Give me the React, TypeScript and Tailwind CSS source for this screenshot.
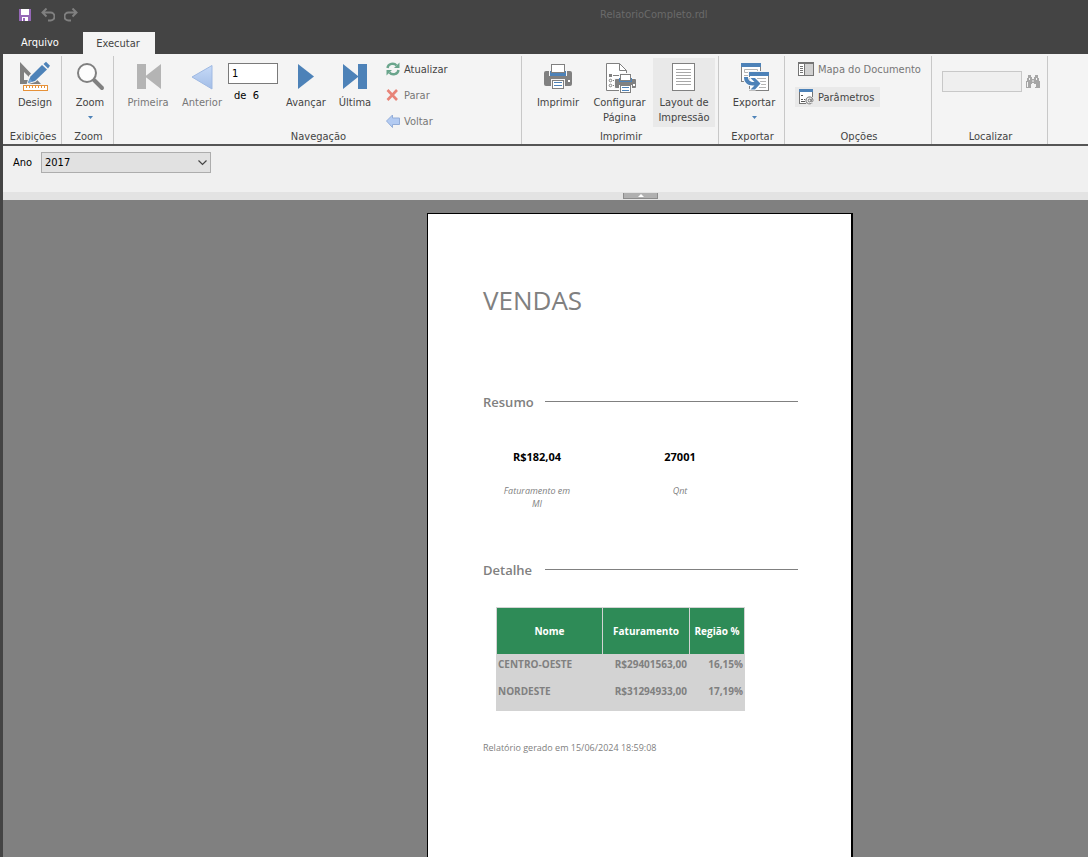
import type { ReactNode } from "react";

const uiFont = "font-['DejaVu_Sans_Condensed','DejaVu_Sans',sans-serif]";
const reportFont = "font-['Open_Sans','Noto_Sans',sans-serif]";

function Svg({ children, w = 32, h = 32 }: { children: ReactNode; w?: number; h?: number }) {
  return (
    <svg aria-hidden="true" width={w} height={h} viewBox={`0 0 ${w} ${h}`} className="shrink-0">
      {children}
    </svg>
  );
}

const DesignIcon = () => (
  <Svg>
    <path fillRule="evenodd" fill="#808080" d="M1 1 L22 23 H1 Z M5 11 V19 H13 Z" />
    <path d="M9 22 L11 15 L26 0 L31 5 L16 20 Z" fill="#f4f4f4" stroke="#f4f4f4" strokeWidth="2" />
    <path d="M9 22 L11.500 15.500 L23 4 L28 8.500 L16 20 Z" fill="#4d82b8" />
    <path d="M24.500 3 L27 0.800 L31 4.800 L29 7.500 Z" fill="#4d82b8" />
    <path d="M9 22 L10.500 17.500 L13.500 20.500 Z" fill="#6fa0d0" />
    <rect x="4.500" y="24.500" width="24" height="5" fill="#fff" stroke="#e69138" />
    <path d="M7.500 25v2M10.500 25v2M13.500 25v2M16.500 25v2M19.500 25v2M22.500 25v2M25.500 25v2" stroke="#e69138" />
  </Svg>
);
const ZoomIcon = () => (
  <Svg>
    <path d="M19 18 L28 27" stroke="#808080" strokeWidth="4" strokeLinecap="round" />
    <circle cx="13" cy="12" r="9" fill="#fdfdfd" stroke="#808080" strokeWidth="2" />
  </Svg>
);
const FirstIcon = () => (
  <Svg><path fill="#b4b4b4" d="M5 3h9v25H5z M13 15.500 L29 3 V28Z" /></Svg>
);
const PrevIcon = () => (
  <Svg>
    <defs>
      <linearGradient id="prev" x1="0" y1="0" x2="0" y2="1">
        <stop offset="0" stopColor="#c6daf8" /><stop offset="1" stopColor="#a3bde6" />
      </linearGradient>
    </defs>
    <path d="M6 16 L26 4.500 V28Z" fill="url(#prev)" stroke="#9fb9e2" strokeLinejoin="round" />
  </Svg>
);
const NextIcon = () => (
  <Svg><path fill="#4d82b8" d="M8 3 L24 15.500 L8 28Z" /></Svg>
);
const LastIcon = () => (
  <Svg><path fill="#4d82b8" d="M4 3 L19 15 V3h9v25h-9V16 L4 28Z" /></Svg>
);
const PrintIcon = () => (
  <Svg>
    <rect x="2" y="10" width="28" height="15" rx="2" fill="#808080" />
    <path d="M7 9h18v6H7z" fill="#f4f4f4" />
    <path d="M8 10h16v5H8z" fill="#4d82b8" />
    <rect x="9.500" y="3.500" width="13" height="8" fill="#fff" stroke="#808080" />
    <path d="M9 18h14v11H9z" fill="#f4f4f4" />
    <rect x="10.500" y="19.500" width="11" height="8" fill="#fff" stroke="#808080" />
    <path d="M12 21.500h8M12 24.500h8" stroke="#4d82b8" />
    <rect x="26" y="19" width="2" height="2" fill="#fff" />
  </Svg>
);
const PageSetupIcon = () => (
  <Svg>
    <path d="M2.500 2.500h13l7 7v20h-20z" fill="#fff" stroke="#808080" />
    <path d="M15.500 2.500v7h7" fill="none" stroke="#808080" />
    <rect x="5" y="13" width="3" height="3" fill="#808080" />
    <path d="M9 14.500h6M9 19.500h2M9 24.500h2" stroke="#808080" />
    <circle cx="6.500" cy="19.500" r="1.300" fill="#fff" stroke="#808080" />
    <circle cx="6.500" cy="24.500" r="1.300" fill="#fff" stroke="#808080" />
    <path d="M15 12h13v5h4v11h-4v4H15v-4h-5V17h5z" fill="#f8f8f8" />
    <rect x="11" y="18" width="21" height="9" rx="1" fill="#808080" />
    <path d="M15 17h13v4H15z" fill="#4d82b8" />
    <rect x="16.500" y="13.500" width="10" height="6" fill="#fff" stroke="#808080" />
    <path d="M15 24h13v8H15z" fill="#f8f8f8" />
    <rect x="16.500" y="24.500" width="10" height="7" fill="#fff" stroke="#808080" />
    <path d="M18 26.500h7M18 29.500h7" stroke="#4d82b8" />
    <rect x="29" y="23" width="2" height="2" fill="#fff" />
  </Svg>
);
const PageIcon = () => (
  <Svg>
    <rect x="4.500" y="2.500" width="22" height="27" fill="#fff" stroke="#808080" />
    <path d="M8 8.500h15M8 11.500h15M8 14.500h15M8 17.500h15M8 20.500h15M8 23.500h15" stroke="#a8a8a8" />
  </Svg>
);
const ExportIcon = () => (
  <Svg>
    <rect x="3.500" y="2.500" width="19" height="18" fill="#fff" stroke="#808080" />
    <path d="M3 2h20v4H3z" fill="#4d82b8" />
    <path d="M6.500 8.500h13v3h-13zM6 14.500h4" fill="none" stroke="#b4b4b4" />
    <path d="M10 10h22v21H10z" fill="#f4f4f4" />
    <rect x="11.500" y="11.500" width="19" height="18" fill="#fff" stroke="#808080" />
    <path d="M11 11h20v4H11z" fill="#4d82b8" />
    <path d="M19 17.500h9M22 20.500h6M23 23.500h5M21 26.500h7" stroke="#b4b4b4" />
    <path
      d="M6 16h4c0 3.500 2.500 5 5.500 5h1L12.500 17h4.500L22.500 22.500 L17 28.500h-4.500l4-4h-2C9.500 24.500 6 21.500 6 16Z"
      fill="#4d82b8" stroke="#fff" strokeWidth="2" paintOrder="stroke"
    />
  </Svg>
);
const RefreshIcon = () => (
  <Svg w={14} h={14}>
    <path d="M1.500 6 C2 1.500 8 0.500 10.500 3.500" fill="none" stroke="#6aa58c" strokeWidth="2.400" />
    <path d="M13.500 0.500 V6 H8Z" fill="#6aa58c" />
    <path d="M12.500 8 C12 12.500 6 13.500 3.500 10.500" fill="none" stroke="#6aa58c" strokeWidth="2.400" />
    <path d="M0.500 13.500 V8 H6Z" fill="#6aa58c" />
  </Svg>
);
const StopIcon = () => (
  <Svg w={14} h={14}>
    <path d="M1.500 2 L11 12 M11 2 L1.500 12" stroke="#e88478" strokeWidth="2.600" />
  </Svg>
);
const BackIcon = () => (
  <Svg w={14} h={14}>
    <path d="M0.500 7 L6.500 1 V4 H13.500 V10.500 H6.500 V13.500Z" fill="#b3cbf2" stroke="#93add8" strokeLinejoin="round" />
  </Svg>
);
const MapIcon = () => (
  <Svg w={16} h={14}>
    <rect x="0.500" y="0.500" width="15" height="13" fill="#fff" stroke="#747474" />
    <path d="M0 0h16v2H0z" fill="#747474" />
    <path d="M7 2h8v11H7z" fill="#d0d0d0" />
    <path d="M6.500 1v12M2 4.500h3M2 6.500h3M2 8.500h3M2 10.500h3" stroke="#747474" />
  </Svg>
);
const ParamIcon = () => (
  <Svg w={15} h={16}>
    <rect x="0.500" y="0.500" width="13" height="14" fill="#fff" stroke="#747474" />
    <path d="M0 0h14v3H0z" fill="#4d82b8" />
    <path d="M2 6.500h2M2 10.500h2M5 10.500h2M2 12.500h5" stroke="#555" />
    <circle cx="10.500" cy="11.500" r="4.500" fill="#f0f0f0" />
    <path d="M12.500 14.300 A3.500 3.500 0 1 1 14 11.500 C14 13.200 12.200 13.200 12.200 12 V9.800" fill="none" stroke="#747474" />
    <circle cx="10.600" cy="11.500" r="1.400" fill="none" stroke="#747474" />
  </Svg>
);
const BinocularsIcon = () => (
  <Svg w={16} h={14}>
    <path fill="#a6a6a6" d="M3 0h3v2h1v2h2V2h1V0h3v3h1v3h1v7h-5V9H9V8H7v1H6v4H1V6h1V3h1z" />
    <path d="M4.500 3v2M11.500 3v2M2.500 7v5M10.500 9v3M8 5v2" stroke="#f4f4f4" />
  </Svg>
);
const SaveIcon = () => (
  <Svg w={12} h={12}>
    <path fill="#9668b8" d="M0 0h12v12H0z" />
    <path fill="#fff" d="M2 0h8v6H2zM3 8h6v4H3z" />
    <path fill="#9668b8" d="M4 9h2v3H4z" />
  </Svg>
);
const UndoIcon = () => (
  <Svg w={14} h={14}>
    <path d="M1 4.500h8.500a3.500 3.500 0 0 1 0 8H7M5.500 0.500 L1.500 4.500 L5.500 8.500" fill="none" stroke="#808080" strokeWidth="2" />
  </Svg>
);
const RedoIcon = () => (
  <Svg w={14} h={14}>
    <path d="M13 4.500H4.500a3.500 3.500 0 0 0 0 8H7M8.500 0.500 L12.500 4.500 L8.500 8.500" fill="none" stroke="#808080" strokeWidth="2" />
  </Svg>
);
const DropArrow = () => (
  <svg aria-hidden="true" width="5" height="3" viewBox="0 0 5 3" className="mt-1.5">
    <path d="M0 0h5L2.500 3z" fill="#4d82b8" />
  </svg>
);

function Group({ label, width, children }: { label: string; width: string; children: ReactNode }) {
  return (
    <section aria-label={label} className={`${width} mt-0.5 flex shrink-0 flex-col border-r border-[#c8c8c8]`}>
      <div className="flex h-[73px] shrink-0 items-start">{children}</div>
      <h2 className="pl-0.5 text-center leading-4 whitespace-nowrap">{label}</h2>
    </section>
  );
}

function BigButton({ icon, label, width, dim, active, menu }: {
  icon: ReactNode; label: string; width: string; dim?: boolean; active?: boolean; menu?: boolean;
}) {
  return (
    <button
      type="button"
      className={`${width} mt-0.5 flex h-[69px] shrink-0 flex-col items-center pt-[3px] ${dim ? "text-[#777777]" : ""} ${active ? "bg-[#e9e9e9]" : ""}`}
    >
      {icon}
      <span className="mt-0.5 text-center leading-[15px]">{label}</span>
      {menu && <DropArrow />}
    </button>
  );
}

function SmallButton({ icon, label, style }: { icon: ReactNode; label: string; style: string }) {
  return (
    <button type="button" className={`${style} flex items-center gap-1 whitespace-nowrap`}>
      {icon}
      <span className="pt-0.5 leading-3.5">{label}</span>
    </button>
  );
}

const rows = [
  ["CENTRO-OESTE", "R$29401563,00", "16,15%"],
  ["NORDESTE", "R$31294933,00", "17,19%"],
];

function SectionTitle({ children }: { children: ReactNode }) {
  return (
    <div className="flex h-5 items-center gap-3">
      <h2 className="w-[50px] pt-0.5 text-[13px] leading-[18px] font-semibold">{children}</h2>
      <div className="h-px flex-1 bg-[#808080]" />
    </div>
  );
}

export default function App() {
  return (
    <div className={`${uiFont} flex h-screen flex-col overflow-hidden border-l-3 border-[#444444] bg-[#808080] text-[11px] text-[#444444]`}>
      <header className="shrink-0 bg-[#444444]">
        <div className="flex h-8 items-center pb-0.5 pl-4">
          <div className="flex w-[581px] items-center gap-[9px]">
            <button type="button" aria-label="Salvar" className="mr-px"><SaveIcon /></button>
            <button type="button" aria-label="Desfazer"><UndoIcon /></button>
            <button type="button" aria-label="Refazer"><RedoIcon /></button>
          </div>
          <h1 className="text-[#6a6a6a]">RelatorioCompleto.rdl</h1>
        </div>
        <nav className="flex h-[22px]">
          <button type="button" className="w-20 pr-1.5 text-white">Arquivo</button>
          <button type="button" className="w-18 bg-[#f4f4f4] pt-0.5 pr-0.5">Executar</button>
        </nav>
      </header>

      <div className="flex h-[92px] shrink-0 border-b-2 border-[#555555] bg-[#f4f4f4]">
        <Group label="Exibições" width="w-[59px]">
          <BigButton icon={<DesignIcon />} label="Design" width="w-16" />
        </Group>
        <Group label="Zoom" width="w-[52px]">
          <BigButton icon={<ZoomIcon />} label="Zoom" width="w-14" menu />
        </Group>
        <Group label="Navegação" width="w-[408px]">
          <div className="flex pl-1.5">
            <BigButton icon={<FirstIcon />} label="Primeira" width="w-14" dim />
            <BigButton icon={<PrevIcon />} label="Anterior" width="w-[52px]" dim />
            <div className="w-[50px] pt-[7px] text-black">
              <input aria-label="Página" defaultValue="1" className="h-[21px] w-full border border-[#7a7a7a] bg-white px-[3px]" />
              <div className="pt-1 pl-1.5 leading-4 whitespace-pre">de  6</div>
            </div>
            <BigButton icon={<NextIcon />} label="Avançar" width="w-14" />
            <BigButton icon={<LastIcon />} label="Última" width="w-[42px]" />
            <div className="flex flex-col gap-0.5 pt-px pl-2.5">
              <SmallButton icon={<RefreshIcon />} label="Atualizar" style="h-6" />
              <SmallButton icon={<StopIcon />} label="Parar" style="h-6 text-[#777777]" />
              <SmallButton icon={<BackIcon />} label="Voltar" style="h-6 text-[#777777]" />
            </div>
          </div>
        </Group>
        <Group label="Imprimir" width="w-[197px]">
          <div className="flex pl-2">
            <BigButton icon={<PrintIcon />} label="Imprimir" width="w-14" />
            <BigButton icon={<PageSetupIcon />} label="Configurar Página" width="w-[67px]" />
            <BigButton icon={<PageIcon />} label="Layout de Impressão" width="w-[62px]" active />
          </div>
        </Group>
        <Group label="Exportar" width="w-[66px]">
          <BigButton icon={<ExportIcon />} label="Exportar" width="w-[70px]" menu />
        </Group>
        <Group label="Opções" width="w-[147px]">
          <div className="flex flex-col items-start gap-2 pt-[3px] pl-2.5">
            <SmallButton icon={<MapIcon />} label="Mapa do Documento" style="h-5 pl-[3px] text-[#777777]" />
            <SmallButton icon={<ParamIcon />} label="Parâmetros" style="h-5 bg-[#e9e9e9] pr-1.5 pl-1" />
          </div>
        </Group>
        <Group label="Localizar" width="w-[116px]">
          <div className="flex items-center gap-[3px] pt-[15px] pl-2.5">
            <input aria-label="Localizar" disabled className="h-[21px] w-20 border border-[#c8c8c8] bg-[#efefef]" />
            <button type="button" aria-label="Procurar"><BinocularsIcon /></button>
          </div>
        </Group>
      </div>

      <form className="flex h-[46px] shrink-0 items-start bg-[#f0f0f0] pt-1.5 pl-2.5 text-black">
        <label htmlFor="ano" className="w-7 leading-[22px]">Ano</label>
        <div className="relative w-[170px]">
          <select id="ano" defaultValue="2017" className="block h-[21px] w-full appearance-none border border-[#adadad] bg-[#e1e1e1] pt-0.5 pl-[3px]">
            <option>2017</option>
          </select>
          <svg aria-hidden="true" width="9" height="6" viewBox="0 0 9 6" className="pointer-events-none absolute top-2 right-1">
            <path d="M0.500 0.500 L4.500 4.500 L8.500 0.500" fill="none" stroke="#444" strokeWidth="1.200" />
          </svg>
        </div>
      </form>
      <div className="flex h-2 shrink-0 items-end bg-[#e3e3e3] pb-px pl-[620px]">
        <button type="button" aria-label="Recolher parâmetros" className="flex h-1.5 w-[35px] items-center justify-center border-x border-b border-[#8c8c8c] bg-[#b0b0b0]">
          <svg aria-hidden="true" width="6" height="3" viewBox="0 0 6 3"><path d="M0 3h6L3 0z" fill="#fff" /></svg>
        </button>
      </div>

      <main className="flex flex-1 overflow-hidden pt-[13px] pl-[424px]">
        <article className={`${reportFont} w-[426px] shrink-0 border-t border-r-2 border-l border-black bg-white pt-17 pr-[53px] pl-[55px] text-[#808080]`}>
          <h1 className="text-[26px] leading-9">VENDAS</h1>
          <div className="mt-[73px]"><SectionTitle>Resumo</SectionTitle></div>
          <dl className="mt-[38px] flex gap-[35px] text-center">
            <div className="w-[108px]">
              <dd className="text-[11px] leading-4 font-bold text-black">R$182,04</dd>
              <dt className="mt-[19px] px-4 text-[9px] leading-[13px] italic">Faturamento em MI</dt>
            </div>
            <div className="w-[108px]">
              <dd className="text-[11px] leading-4 font-bold text-black">27001</dd>
              <dt className="mt-[19px] px-4 text-[9px] leading-[13px] italic">Qnt</dt>
            </div>
          </dl>
          <div className="mt-[49px]"><SectionTitle>Detalhe</SectionTitle></div>
          <table className="mt-7 ml-[13px] w-[249px] table-fixed border-separate border-spacing-0 border-t border-[#d3d3d3] bg-[#d3d3d3] text-[10px] font-bold">
            <thead>
              <tr className="h-[46px] bg-[#2e8b57] text-white">
                <th className="w-[106px] border-l border-[#d3d3d3]">Nome</th>
                <th className="w-[87px] border-l border-[#d3d3d3]">Faturamento</th>
                <th className="w-14 border-x border-[#d3d3d3] whitespace-nowrap">Região %</th>
              </tr>
            </thead>
            <tbody>
              {rows.map(([name, total, share]) => (
                <tr key={name} className="h-[27px] last:h-[30px]">
                  <td className="px-0.5 pt-[3px] align-top leading-[14px]">{name}</td>
                  <td className="px-0.5 pt-[3px] text-right align-top leading-[14px]">{total}</td>
                  <td className="px-0.5 pt-[3px] text-right align-top leading-[14px]">{share}</td>
                </tr>
              ))}
            </tbody>
          </table>
          <p className="mt-[30px] text-[9px] leading-[13px]">Relatório gerado em 15/06/2024 18:59:08</p>
        </article>
      </main>
    </div>
  );
}
